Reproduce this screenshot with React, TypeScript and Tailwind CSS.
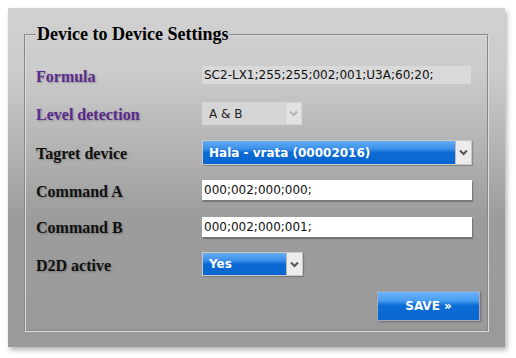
import React from 'react';

const Chevron: React.FC<{ color: string }> = ({ color }) => (
  <svg width="9" height="7" viewBox="0 0 9 7" fill="none">
    <path d="M1 1.5 L4.5 5 L8 1.5" stroke={color} strokeWidth="2" />
  </svg>
);

interface FakeSelectProps {
  value: string;
  width: string;
  height: string;
  disabled?: boolean;
}

const FakeSelect: React.FC<FakeSelectProps> = ({ value, width, height, disabled }) => (
  <div
    className={`${width} ${height} flex items-stretch p-px ${
      disabled ? 'bg-[#d6d6d6]' : 'bg-[#c9c9c9] shadow-[1px_1px_1px_rgba(0,0,0,0.2)]'
    }`}
  >
    <div
      className={`flex-1 flex items-center pl-[6px] text-[12px] ${
        disabled
          ? 'text-[#222] bg-[#d6d6d6]'
          : 'text-white font-bold bg-[linear-gradient(#64adf6,#3b8ee8_35%,#0b6ad4_50%,#0a66d0)]'
      }`}
    >
      {value}
    </div>
    <div
      className={`w-[16px] flex items-center justify-center border-l ${
        disabled ? 'bg-[#e2e2e2] border-[#d0d0d0]' : 'bg-[#ececec] border-[#bbb]'
      }`}
    >
      <Chevron color={disabled ? '#b5b5b5' : '#555'} />
    </div>
  </div>
);

const Label: React.FC<{ text: string; purple?: boolean }> = ({ text, purple }) => (
  <div
    className={`w-[166px] shrink-0 mt-[3px] font-['Liberation_Serif',serif] text-[16px] font-bold [text-shadow:1px_1px_2px_rgba(0,0,0,0.25)] ${
      purple ? 'text-[#5a2b8f]' : 'text-[#111]'
    }`}
  >
    {text}
  </div>
);

const TextInput: React.FC<{ value: string }> = ({ value }) => (
  <div className="w-[270px] h-[20px] bg-white flex items-center pl-[2px] text-[12px] text-[#111] shadow-[1px_2px_1px_rgba(0,0,0,0.25)]">
    {value}
  </div>
);

export default function App() {
  return (
    <div className="w-[516px] h-[358px] bg-white pt-2 pl-2 font-['Liberation_Serif',serif]">
      <div className="w-[497px] h-[339px] pt-4 px-4 pb-[15px] bg-[linear-gradient(#d1d1d1,#cccccc_18%,#b5b5b5_40%,#9c9c9c_62%,#9a9a9a)] shadow-[2px_3px_5px_rgba(0,0,0,0.3)]">
        <fieldset className="h-full border-2 [border-style:groove] border-[#dcdcdc] pl-[10px] pr-[7px]">
          <legend className="px-px text-[18px] font-bold text-black leading-[21px]">
            Device to Device Settings
          </legend>
          <div className="flex flex-col pt-[11px] font-['DejaVu_Sans',Verdana,sans-serif]">
            <div className="h-[38px] flex items-center">
              <Label text="Formula" purple />
              <div className="w-[269px] h-[18px] bg-[#d9d9d9] flex items-center pl-[2px] text-[12px] text-[#111]">
                SC2-LX1;255;255;002;001;U3A;60;20;
              </div>
            </div>
            <div className="h-[39px] flex items-center">
              <Label text="Level detection" purple />
              <FakeSelect value="A & B" width="w-[100px]" height="h-[23px]" disabled />
            </div>
            <div className="h-[39px] flex items-center">
              <Label text="Tagret device" />
              <FakeSelect value="Hala - vrata (00002016)" width="w-[270px]" height="h-[25px]" />
            </div>
            <div className="h-[36px] flex items-center">
              <Label text="Command A" />
              <TextInput value="000;002;000;000;" />
            </div>
            <div className="h-[37px] flex items-center">
              <Label text="Command B" />
              <TextInput value="000;002;000;001;" />
            </div>
            <div className="h-[38px] flex items-center">
              <Label text="D2D active" />
              <FakeSelect value="Yes" width="w-[101px]" height="h-[24px]" />
            </div>
            <div className="flex justify-end pt-[8px] pr-0">
              <button className="w-[103px] h-[30px] bg-[linear-gradient(#6db4fa,#4a9ff0_30%,#0c6cd6_48%,#0a66d0)] text-white font-bold text-[12px] shadow-[1px_1px_2px_rgba(0,0,0,0.3)] border border-[#aab]">
                SAVE »
              </button>
            </div>
          </div>
        </fieldset>
      </div>
    </div>
  );
}
